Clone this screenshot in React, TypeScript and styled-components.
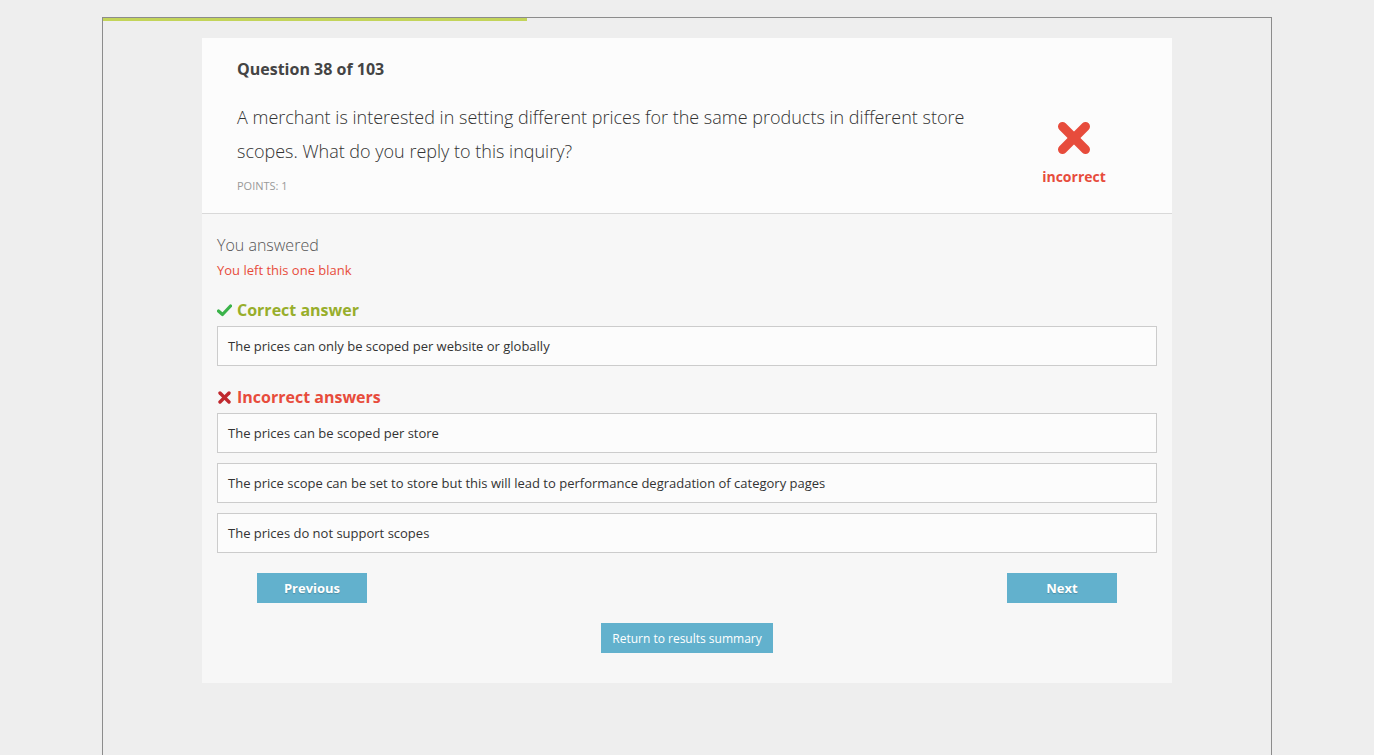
import React from "react";
import styled, { createGlobalStyle } from "styled-components";

const Global = createGlobalStyle`
  html, body { margin: 0; padding: 0; background: #eeeeee; }
  body { font-family: "Open Sans", "Liberation Sans", sans-serif; color: #333; }
  * { box-sizing: border-box; }
`;

const Page = styled.div`
  padding: 17px 102px 0 102px;
  height: 755px;
  overflow: hidden;
`;

const Frame = styled.div`
  border: 1px solid #8c8c8c;
  border-bottom: none;
  min-height: 760px;
  padding: 0 99px;
  position: relative;
`;

const Progress = styled.div`
  position: absolute;
  left: 0;
  top: 0;
  height: 3px;
  background: #c3d45a;
`;

const Card = styled.div`
  margin-top: 20px;
  width: 970px;
`;

const Head = styled.div`
  background: #fcfcfc;
  border-bottom: 1px solid #d9d9d9;
  padding: 21px 35px 20px 35px;
  display: flex;
  justify-content: space-between;
`;

const HeadMain = styled.div`
  width: 760px;
`;

const QTitle = styled.div`
  font-size: 16px;
  font-weight: 700;
  color: #444;
  line-height: 20px;
`;

const QText = styled.div`
  margin-top: 21px;
  font-size: 18px;
  font-weight: 300;
  color: #333;
  line-height: 34px;
`;

const Points = styled.div`
  margin-top: 11px;
  font-size: 11px;
  color: #999;
  line-height: 14px;
`;

const Verdict = styled.div`
  width: 100px;
  margin-right: 13px;
  margin-top: 62px;
  display: flex;
  flex-direction: column;
  align-items: center;
`;

const VerdictText = styled.div`
  margin-top: 12px;
  font-size: 14px;
  font-weight: 700;
  color: #e74c3c;
  line-height: 20px;
`;

const Body = styled.div`
  background: #f7f7f7;
  padding: 21px 15px 30px 15px;
`;

const Label = styled.div`
  font-size: 16px;
  font-weight: 300;
  color: #555;
  line-height: 20px;
`;

const Blank = styled.div`
  margin-top: 6px;
  font-size: 13px;
  color: #e74c3c;
  line-height: 18px;
`;

const SectionHead = styled.div<{ $color: string; $top: number }>`
  margin-top: ${(p) => p.$top}px;
  display: flex;
  align-items: center;
  gap: 5px;
  font-size: 16px;
  font-weight: 700;
  color: ${(p) => p.$color};
  line-height: 22px;
  height: 22px;
`;

const Answers = styled.div`
  margin-top: 5px;
  display: flex;
  flex-direction: column;
  gap: 10px;
`;

const Answer = styled.div`
  height: 40px;
  border: 1px solid #cccccc;
  background: #fcfcfc;
  padding: 0 10px;
  display: flex;
  align-items: center;
  font-size: 13px;
  color: #333;
`;

const NavRow = styled.div`
  margin-top: 20px;
  padding: 0 40px;
  display: flex;
  justify-content: space-between;
`;

const Btn = styled.button<{ $bold?: boolean; $w: number }>`
  width: ${(p) => p.$w}px;
  height: 30px;
  border: none;
  border-radius: 0;
  background: #62b1cd;
  color: #fff;
  font-family: "Open Sans", "Liberation Sans", sans-serif;
  font-size: ${(p) => (p.$bold ? 13 : 12)}px;
  font-weight: ${(p) => (p.$bold ? 700 : 400)};
  text-shadow: ${(p) => (p.$bold ? "0 1px 1px rgba(0,0,0,0.2)" : "none")};
  padding: 0;
  cursor: pointer;
`;

const Center = styled.div`
  margin-top: 20px;
  display: flex;
  justify-content: center;
`;

const BigX = () => (
  <svg width="34" height="34" viewBox="0 0 34 34">
    <g stroke="#e74c3c" strokeWidth="9" strokeLinecap="round">
      <line x1="5.5" y1="5.5" x2="28.5" y2="28.5" />
      <line x1="28.5" y1="5.5" x2="5.5" y2="28.5" />
    </g>
  </svg>
);

const Check = () => (
  <svg width="15" height="14" viewBox="0 0 15 14">
    <path d="M1.5 8 L5.5 11.5 L13.5 3" fill="none" stroke="#3bb34a" strokeWidth="3.2" strokeLinecap="round" strokeLinejoin="round" />
  </svg>
);

const SmallX = () => (
  <svg width="15" height="14" viewBox="0 0 15 14">
    <g stroke="#c0282e" strokeWidth="3.4" strokeLinecap="round">
      <line x1="3" y1="3" x2="12" y2="12" />
      <line x1="12" y1="3" x2="3" y2="12" />
    </g>
  </svg>
);

export default function App() {
  const incorrect = [
    "The prices can be scoped per store",
    "The price scope can be set to store but this will lead to performance degradation of category pages",
    "The prices do not support scopes",
  ];
  return (
    <>
      <Global />
      <Page>
        <Frame>
          <Progress style={{ width: `${(38 / 103) * 1168 - 7}px` }} />
          <Card>
            <Head>
              <HeadMain>
                <QTitle>Question 38 of 103</QTitle>
                <QText>
                  A merchant is interested in setting different prices for the same products in different store
                  scopes. What do you reply to this inquiry?
                </QText>
                <Points>POINTS: 1</Points>
              </HeadMain>
              <Verdict>
                <BigX />
                <VerdictText>incorrect</VerdictText>
              </Verdict>
            </Head>
            <Body>
              <Label>You answered</Label>
              <Blank>You left this one blank</Blank>
              <SectionHead $color="#97ae2b" $top={20}>
                <Check />
                Correct answer
              </SectionHead>
              <Answers>
                <Answer>The prices can only be scoped per website or globally</Answer>
              </Answers>
              <SectionHead $color="#e74c3c" $top={20}>
                <SmallX />
                Incorrect answers
              </SectionHead>
              <Answers>
                {incorrect.map((a) => (
                  <Answer key={a}>{a}</Answer>
                ))}
              </Answers>
              <NavRow>
                <Btn $bold $w={110}>Previous</Btn>
                <Btn $bold $w={110}>Next</Btn>
              </NavRow>
              <Center>
                <Btn $w={172}>Return to results summary</Btn>
              </Center>
            </Body>
          </Card>
        </Frame>
      </Page>
    </>
  );
}
